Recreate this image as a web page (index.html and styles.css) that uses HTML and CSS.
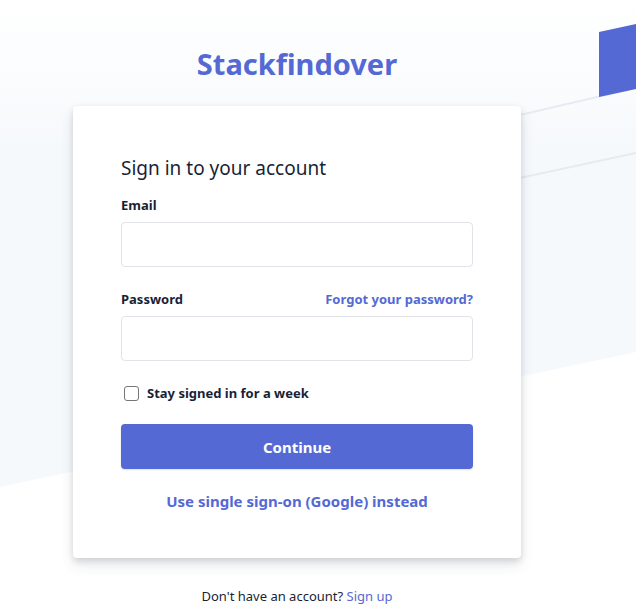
FILE: index.html
```html
<!DOCTYPE html>
<html lang="en">
<head>
<meta charset="utf-8">
<title>Sign in</title>
<link rel="stylesheet" href="styles.css">
</head>
<body>
<svg class="backdrop" width="636" height="604" viewBox="0 0 636 604" aria-hidden="true">
  <defs>
    <linearGradient id="fade" x1="0" y1="0" x2="0" y2="1" gradientUnits="objectBoundingBox">
      <stop offset="0" stop-color="#ffffff"/>
      <stop offset="0.3" stop-color="#f6f9fc"/>
      <stop offset="1" stop-color="#f6f9fc"/>
    </linearGradient>
  </defs>
  <rect width="636" height="604" fill="#ffffff"/>
  <polygon points="0,0 636,0 636,352 0,487" fill="url(#fade)"/>
  <line x1="500" y1="119.6" x2="636" y2="88" stroke="#e6ebf1" stroke-width="2"/>
  <line x1="500" y1="182.3" x2="636" y2="153" stroke="#e6ebf1" stroke-width="2"/>
  <polygon points="599,32 636,24 636,89 599,97" fill="#5469d4"/>
</svg>
<main class="page">
  <h1 class="logo">Stackfindover</h1>
  <section class="card">
    <h2 class="title">Sign in to your account</h2>
    <form class="form">
      <div class="field">
        <div class="label-row"><label class="label" for="email">Email</label></div>
        <input class="input" id="email" type="email">
      </div>
      <div class="field">
        <div class="label-row">
          <label class="label" for="password">Password</label>
          <a class="link small" href="#">Forgot your password?</a>
        </div>
        <input class="input" id="password" type="password">
      </div>
      <label class="check">
        <span class="box"></span>
        <span>Stay signed in for a week</span>
      </label>
      <button class="button" type="button">Continue</button>
      <a class="link sso" href="#">Use single sign-on (Google) instead</a>
    </form>
  </section>
  <p class="footer">Don't have an account? <a class="link plain" href="#">Sign up</a></p>
</main>
</body>
</html>
```
FILE: styles.css
```css
html, body {
  margin: 0;
  padding: 0;
}
body {
  position: relative;
  width: 636px;
  height: 604px;
  overflow: hidden;
  font-family: "Noto Sans", "Open Sans", sans-serif;
  color: #1a1f36;
  background: #ffffff;
}
.backdrop {
  position: absolute;
  left: 0;
  top: 0;
  z-index: 0;
}
.page {
  position: relative;
  z-index: 1;
  width: 594px;
  display: flex;
  flex-direction: column;
  align-items: center;
  padding-top: 44px;
}
.logo {
  margin: 0;
  height: 40px;
  line-height: 40px;
  font-size: 29px;
  font-weight: 700;
  color: #5469d4;
  letter-spacing: 0;
}
.card {
  margin-top: 22px;
  width: 448px;
  box-sizing: border-box;
  padding: 48px 48px 46px;
  background: #ffffff;
  border-radius: 4px;
  box-shadow: 0 7px 14px 0 rgba(60, 66, 87, 0.12), 0 3px 6px 0 rgba(0, 0, 0, 0.12);
}
.title {
  margin: 0;
  font-size: 19px;
  line-height: 28px;
  font-weight: 400;
  color: #1a1f36;
}
.form {
  display: flex;
  flex-direction: column;
  margin-top: 13px;
}
.field {
  display: flex;
  flex-direction: column;
  gap: 7px;
  margin-bottom: 22px;
}
.label-row {
  display: flex;
  justify-content: space-between;
  align-items: center;
  height: 20px;
}
.label {
  font-size: 13px;
  font-weight: 700;
  color: #1a1f36;
}
.input {
  box-sizing: border-box;
  height: 45px;
  width: 100%;
  border: 1px solid #e0e3e8;
  border-radius: 4px;
  background: #fff;
  margin: 0;
}
.link {
  color: #5469d4;
  text-decoration: none;
  font-weight: 700;
}
.small {
  font-size: 13px;
}
.check {
  display: flex;
  align-items: center;
  gap: 8px;
  height: 20px;
  margin-top: 0;
  padding-left: 3px;
  font-size: 13px;
  font-weight: 700;
  color: #1a1f36;
}
.box {
  width: 13px;
  height: 13px;
  border: 1px solid #767676;
  border-radius: 3px;
  background: #fff;
}
.button {
  margin-top: 21px;
  height: 45px;
  width: 100%;
  border: 0;
  border-radius: 4px;
  background: #5469d4;
  color: #ffffff;
  font-family: inherit;
  font-size: 15px;
  font-weight: 700;
  box-shadow: 0 1px 2px rgba(0, 0, 0, 0.12);
}
.sso {
  margin-top: 21px;
  text-align: center;
  font-size: 15px;
  line-height: 22px;
}
.footer {
  margin: 28px 0 0;
  font-size: 13px;
  line-height: 20px;
  color: #1a1f36;
}
.plain {
  font-weight: 400;
}
```
